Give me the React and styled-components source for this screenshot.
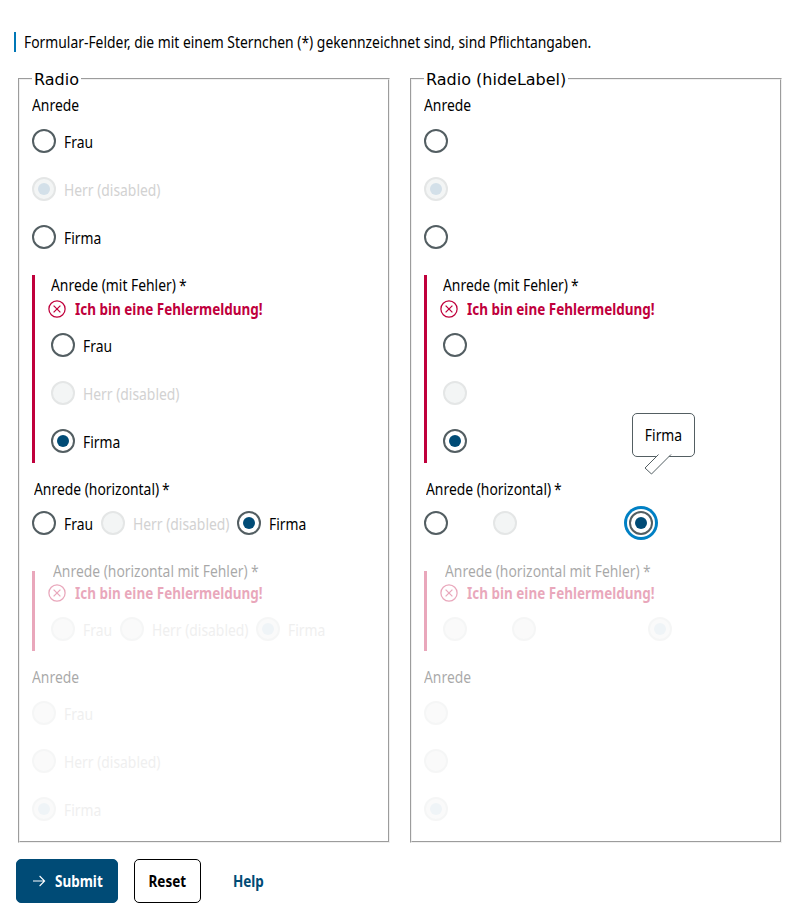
import React from 'react';
import styled, { createGlobalStyle, css } from 'styled-components';

const GlobalStyle = createGlobalStyle`
  *, *::before, *::after { box-sizing: border-box; }
  body { margin: 0; background: #fff; color: #000; font: 16px/24px "Noto Sans", sans-serif; }
`;

const Page = styled.main`
  display: flex;
  flex-direction: column;
  padding: 32px 16px 0;
`;

const Hint = styled.p`
  margin: 0 0 0 -2px;
  height: 20px;
  padding-left: 8px;
  border-left: 2px solid #0077b6;
  line-height: 21px;
  white-space: nowrap;
`;

/* Narrows the sans face to the proportions of the form's typeface. */
const Condensed = styled.span`
  display: inline-block;
  white-space: nowrap;
  transform: scaleX(${(p) => (p.$bold ? 0.843 : 0.867)});
  transform-origin: ${(p) => (p.$centered ? 'center' : 'left')} center;
`;

const Columns = styled.div`
  display: grid;
  grid-template-columns: 1fr 1fr;
  gap: 16px;
  margin-top: 17px;
`;

const Panel = styled.fieldset`
  min-width: 0;
  height: 774px;
  margin: 0 2px;
  padding: 0 12px;
  border: 2px groove #f0f0f0;
`;

const PanelTitle = styled.legend`
  height: 19px;
  padding: 0 2px;
  font: 16px/21px "DejaVu Sans", Verdana, sans-serif;
  white-space: nowrap;
`;

const Group = styled.section`
  position: relative;
  display: flex;
  flex-direction: column;
  margin-top: ${(p) => p.$top}px;
  opacity: ${(p) => (p.$faded ? 0.34 : 1)};
  ${(p) =>
    p.$error &&
    css`
      padding: 0 0 10px 16px;
      border-left: 3px solid #c0003c;
    `}
`;

const GroupLabel = styled.div`
  display: flex;
  height: 24px;
  margin-top: ${(p) => p.$lift || 0}px;
  padding-left: ${(p) => (p.$indent ? 2 : 0)}px;
  line-height: 22px;
`;

const LabelText = styled.span`
  flex: none;
  width: ${(p) => (p.$width ? `${p.$width}px` : 'auto')};
`;

const ErrorLine = styled.div`
  display: flex;
  align-items: center;
  gap: 9px;
  height: 24px;
  margin: ${(p) => (p.$tight ? -3 : -1)}px 0 1px -3px;
  color: #c0003c;
  font-weight: 700;
  svg { flex: none; }
`;

const Options = styled.div`
  display: flex;
  flex-direction: ${(p) => (p.$horizontal ? 'row' : 'column')};
  gap: ${(p) => (p.$horizontal ? 0 : 24)}px;
  margin-top: ${(p) => p.$top}px;
`;

const Option = styled.label`
  position: relative;
  display: flex;
  gap: 8px;
  height: 24px;
  width: ${(p) => (p.$width ? `${p.$width}px` : 'auto')};
  color: ${(p) => (p.$disabled ? '#d2d2d2' : '#000')};
`;

const Circle = styled.span`
  display: flex;
  flex: none;
  align-items: center;
  justify-content: center;
  width: 24px;
  height: 24px;
  border: 2px solid ${(p) => (p.$disabled ? '#e4e6e6' : '#535e62')};
  border-radius: 50%;
  background: ${(p) => (p.$faded ? '#f2f2f2' : p.$disabled ? '#f3f5f5' : '#fff')};
  ${(p) =>
    p.$focused &&
    css`
      box-shadow: 0 0 0 2px #fff, 0 0 0 5px #0080c4;
    `}
`;

const Dot = styled.span`
  width: 12px;
  height: 12px;
  border-radius: 50%;
  background: ${(p) => (p.$disabled ? '#d3e0e9' : '#004b76')};
`;

const OptionText = styled.span`
  padding-top: 2px;
  line-height: 22px;
`;

const Tooltip = styled.span`
  position: absolute;
  left: 3px;
  top: -98px;
  display: flex;
  align-items: center;
  justify-content: center;
  width: 63px;
  height: 44px;
  border: 1px solid #535e62;
  border-radius: 5px;
  background: #fff;
`;

const Tail = styled.svg`
  position: absolute;
  left: 11px;
  top: 40px;
`;

const Actions = styled.div`
  display: flex;
  gap: 16px;
  margin-top: 16px;
`;

const Button = styled.button`
  display: flex;
  align-items: center;
  justify-content: center;
  gap: 9px;
  width: ${(p) => p.$width}px;
  height: 44px;
  padding: 0;
  border: 1px solid ${(p) => p.$border};
  border-radius: 5px;
  background: ${(p) => p.$background};
  color: ${(p) => p.$color};
  font: 700 16px/24px "Noto Sans", sans-serif;
`;

const ButtonText = styled.span`
  width: ${(p) => p.$width}px;
  text-align: left;
`;

const ErrorIcon = () => (
  <svg width="18" height="18" viewBox="0 0 18 18" fill="none" stroke="currentColor" strokeWidth="1.25">
    <circle cx="9" cy="9" r="8.1" />
    <path d="M5.6 5.6l6.8 6.8M12.4 5.6l-6.8 6.8" />
  </svg>
);

const ArrowIcon = () => (
  <svg width="14" height="12" viewBox="0 0 14 12" fill="none" stroke="currentColor" strokeWidth="1.1">
    <path d="M1 6h11.6M7.6 1l5 5-5 5" />
  </svg>
);

const NAMES = ['Frau', 'Herr (disabled)', 'Firma'];
const WIDTHS = [69, 136, 80];

const GROUPS = [
  { label: 'Anrede', top: 6, optionsTop: 11, checked: 1 },
  { label: 'Anrede (mit Fehler)', labelWidth: 128, required: true, error: true, top: 26, lift: -1, optionsTop: 11, checked: 2 },
  { label: 'Anrede (horizontal)', labelWidth: 128, required: true, indent: true, horizontal: true, top: 15, optionsTop: 9, checked: 2 },
  { label: 'Anrede (horizontal mit Fehler)', labelWidth: 198, required: true, indent: true, horizontal: true, error: true, faded: true, top: 36, lift: -11, optionsTop: 11, checked: 2 },
  { label: 'Anrede', faded: true, top: 15, optionsTop: 11, checked: 2 },
];

function RadioGroup({ group, hideLabel }) {
  return (
    <Group $top={group.top} $error={group.error} $faded={group.faded}>
      <GroupLabel $lift={group.lift} $indent={group.indent}>
        <LabelText $width={group.labelWidth}><Condensed>{group.label}</Condensed></LabelText>
        {group.required && <Condensed>*</Condensed>}
      </GroupLabel>
      {group.error && (
        <ErrorLine $tight={group.horizontal}>
          <ErrorIcon />
          <Condensed $bold>Ich bin eine Fehlermeldung!</Condensed>
        </ErrorLine>
      )}
      <Options $horizontal={group.horizontal} $top={group.optionsTop}>
        {NAMES.map((name, i) => {
          const disabled = group.faded || i === 1;
          const focused = hideLabel && group.horizontal && !group.faded && i === 2;
          return (
            <Option key={name} $disabled={disabled} $width={group.horizontal ? WIDTHS[i] : 0}>
              <Circle $disabled={disabled} $faded={group.faded} $focused={focused}>
                {group.checked === i && <Dot $disabled={disabled} />}
              </Circle>
              {!hideLabel && <OptionText><Condensed>{name}</Condensed></OptionText>}
              {focused && (
                <Tooltip>
                  <Condensed $centered>{name}</Condensed>
                  <Tail width="30" height="24" viewBox="0 0 30 24">
                    <path d="M14.5 0L1 13.5L7.5 20L27.5 0Z" fill="#fff" />
                    <path d="M14.5 0.5L1 14L7.5 20L27 0.5" fill="none" stroke="#535e62" />
                  </Tail>
                </Tooltip>
              )}
            </Option>
          );
        })}
      </Options>
    </Group>
  );
}

function RadioPanel({ title, hideLabel }) {
  return (
    <Panel>
      <PanelTitle>{title}</PanelTitle>
      {GROUPS.map((group, i) => (
        <RadioGroup key={i} group={group} hideLabel={hideLabel} />
      ))}
    </Panel>
  );
}

export default function App() {
  return (
    <>
      <GlobalStyle />
      <Page>
        <Hint>
          <Condensed>Formular-Felder, die mit einem Sternchen (*) gekennzeichnet sind, sind Pflichtangaben.</Condensed>
        </Hint>
        <Columns>
          <RadioPanel title="Radio" />
          <RadioPanel title="Radio (hideLabel)" hideLabel />
        </Columns>
        <Actions>
          <Button $width={102} $border="#004b76" $background="#004b76" $color="#fff">
            <ArrowIcon />
            <ButtonText $width={47}><Condensed $bold>Submit</Condensed></ButtonText>
          </Button>
          <Button $width={67} $border="#000" $background="#fff" $color="#000">
            <Condensed $bold $centered>Reset</Condensed>
          </Button>
          <Button $width={63} $border="transparent" $background="transparent" $color="#004b76">
            <Condensed $bold $centered>Help</Condensed>
          </Button>
        </Actions>
      </Page>
    </>
  );
}
